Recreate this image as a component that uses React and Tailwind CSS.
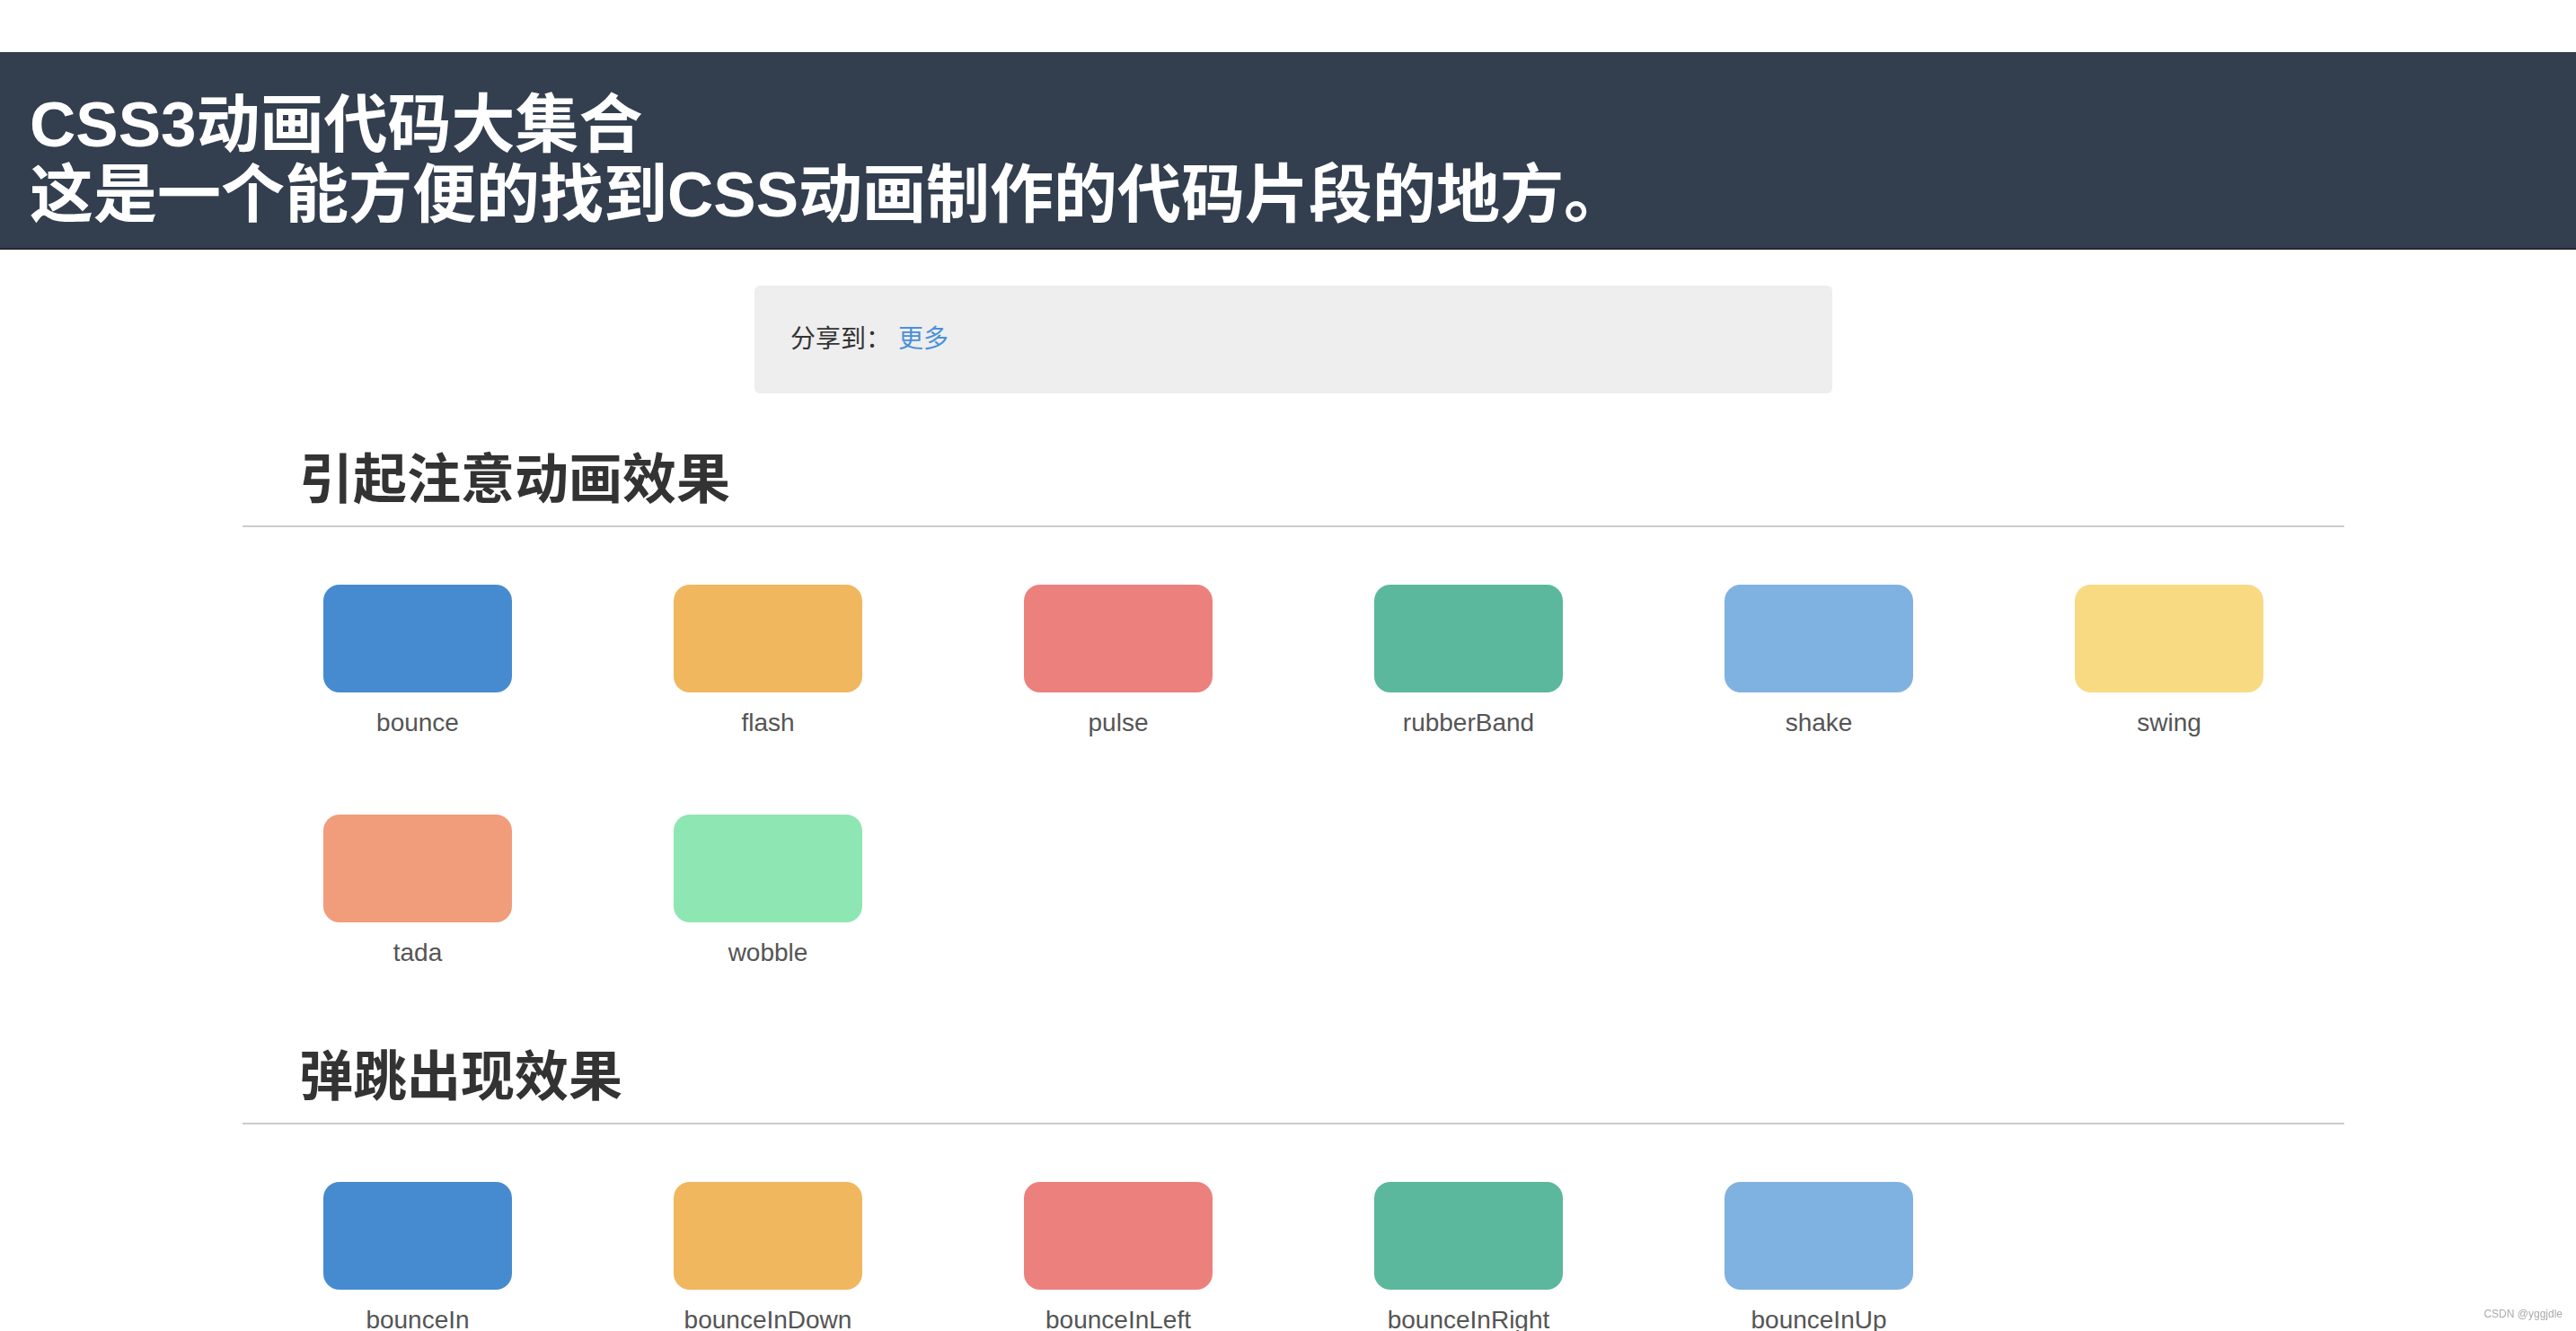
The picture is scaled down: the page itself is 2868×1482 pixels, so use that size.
import React from "react";

const FONT = { fontFamily: '"Liberation Sans", "Noto Sans CJK SC", sans-serif' };

const s1 = [
  { name: "bounce", cls: "bg-[#468bcf]" },
  { name: "flash", cls: "bg-[#f0b75f]" },
  { name: "pulse", cls: "bg-[#ec807d]" },
  { name: "rubberBand", cls: "bg-[#5bb89d]" },
  { name: "shake", cls: "bg-[#7fb2e0]" },
  { name: "swing", cls: "bg-[#f8da83]" },
  { name: "tada", cls: "bg-[#f19c7b]" },
  { name: "wobble", cls: "bg-[#8ee6b2]" },
];

const s2 = [
  { name: "bounceIn", cls: "bg-[#468bcf]" },
  { name: "bounceInDown", cls: "bg-[#f0b75f]" },
  { name: "bounceInLeft", cls: "bg-[#ec807d]" },
  { name: "bounceInRight", cls: "bg-[#5bb89d]" },
  { name: "bounceInUp", cls: "bg-[#7fb2e0]" },
];

function Section({ title, items, topClass }) {
  return (
    <section className={topClass}>
      <h2 className="pl-[63px] pb-[8px] border-b-2 border-[#cccccc] text-[60px] leading-[84px] font-bold text-[#333333]">
        {title}
      </h2>
      <div className="grid grid-cols-6 gap-y-[82px] mt-[64px]">
        {items.map((it) => (
          <div key={it.name} className="flex flex-col items-center">
            <div className={`w-[210px] h-[120px] rounded-[18px] ${it.cls}`} />
            <div className="mt-[14px] text-[28px] leading-[40px] text-[#555555]">{it.name}</div>
          </div>
        ))}
      </div>
    </section>
  );
}

export default function App() {
  return (
    <div className="min-h-screen bg-white relative" style={FONT}>
      <div className="pt-[58px]">
        <header className="bg-[#333f4f] border-b-2 border-[#23292f] pt-[42px] pb-[20px] pl-[33px] text-white font-bold text-[71px] leading-[78px]">
          <div>CSS3动画代码大集合</div>
          <div>这是一个能方便的找到CSS动画制作的代码片段的地方。</div>
        </header>
      </div>
      <div className="pl-[12px]">
        <div className="w-[2340px] mx-auto">
          <div className="w-[1200px] h-[120px] mx-auto mt-[40px] bg-[#eeeeee] rounded-[6px] flex items-center pl-[40px] text-[28px] text-[#333333]">
            <span>分享到：</span>
            <span className="ml-[8px] text-[#4a90d9]">更多</span>
          </div>
          <Section title="引起注意动画效果" items={s1} topClass="mt-[55px]" />
          <Section title="弹跳出现效果" items={s2} topClass="mt-[77px]" />
        </div>
      </div>
      <div className="fixed right-[15px] bottom-[10px] text-[12px] text-[#aaaaaa]">CSDN @yggjdle</div>
    </div>
  );
}
